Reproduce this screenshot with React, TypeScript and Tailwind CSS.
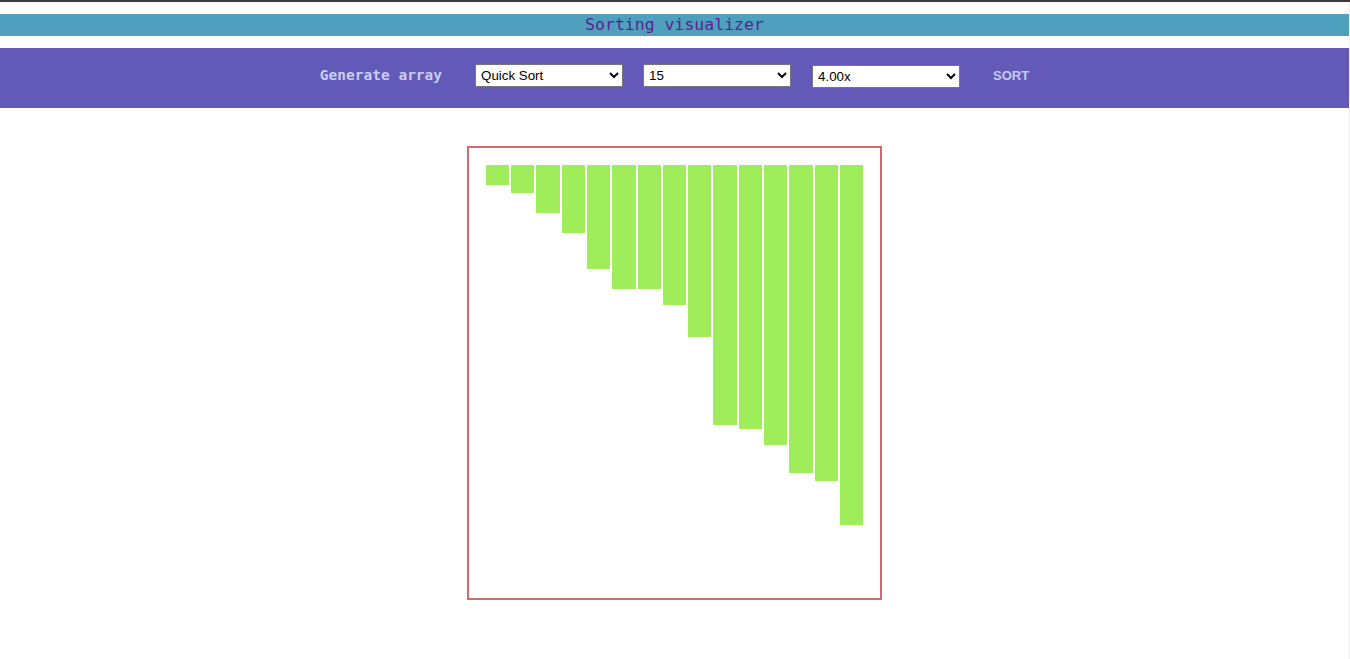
import { useState } from "react";

const values = [5, 7, 12, 17, 26, 31, 31, 35, 43, 65, 66, 70, 77, 79, 90];

const algorithms = ["Bubble Sort", "Selection Sort", "Insertion Sort", "Merge Sort", "Quick Sort", "Heap Sort"];
const sizes = ["5", "10", "15", "20", "25", "30"];
const speeds = ["0.50x", "1.00x", "2.00x", "4.00x"];

const Bar = ({ value, count }: { value: number; count: number }) => (
  <div
    className="bg-[#a0ed5b] mx-[1px] shrink-0"
    style={{ width: `${350 / count}px`, height: `${value * 4}px` }}
  />
);

const Select = ({ options, value, onChange }: { options: string[]; value: string; onChange: (v: string) => void }) => (
  <select
    value={value}
    onChange={(e) => onChange(e.target.value)}
    className="w-[148px] h-[23px] bg-white text-black border border-[#767676] pl-[1px] text-[13.33px] font-['Liberation_Sans',Arial,sans-serif]"
  >
    {options.map((o) => (
      <option key={o} value={o}>{o}</option>
    ))}
  </select>
);

export default function App() {
  const [algo, setAlgo] = useState("Quick Sort");
  const [size, setSize] = useState("15");
  const [speed, setSpeed] = useState("4.00x");

  return (
    <div className="h-[659px] border-t-2 border-[#3b3b3b] bg-white flex">
      <main className="flex-1 flex flex-col border-r border-[#f0f0f0]">
        <header className="mt-[12px] h-[22px] bg-[#4f9fbe] flex items-center justify-center">
          <h1 className="text-[16.5px] text-[#5b1f8f] font-['DejaVu_Sans_Mono',monospace] leading-none">
            Sorting visualizer
          </h1>
        </header>

        <nav className="mt-[12px] h-[60px] bg-[#6359b8] flex items-center justify-center pb-[5px]">
          <button className="text-[14.5px] font-bold text-[#c9cff4] font-['DejaVu_Sans_Mono',monospace] mr-[33px]">
            Generate array
          </button>
          <div className="flex items-center gap-[20px]">
            <Select options={algorithms} value={algo} onChange={setAlgo} />
            <Select options={sizes} value={size} onChange={setSize} />
            <div className="pl-[1px]">
              <Select options={speeds} value={speed} onChange={setSpeed} />
            </div>
          </div>
          <button className="ml-[33px] text-[13px] font-bold text-[#c5cbf2] font-['Liberation_Sans',Arial,sans-serif]">
            SORT
          </button>
        </nav>

        <section className="mt-[38px] mx-auto w-[415px] h-[454px] border-2 border-[#d16b6b] flex justify-center items-start pt-[17px]">
          {values.map((v, i) => (
            <Bar key={i} value={v} count={values.length} />
          ))}
        </section>
      </main>
    </div>
  );
}
